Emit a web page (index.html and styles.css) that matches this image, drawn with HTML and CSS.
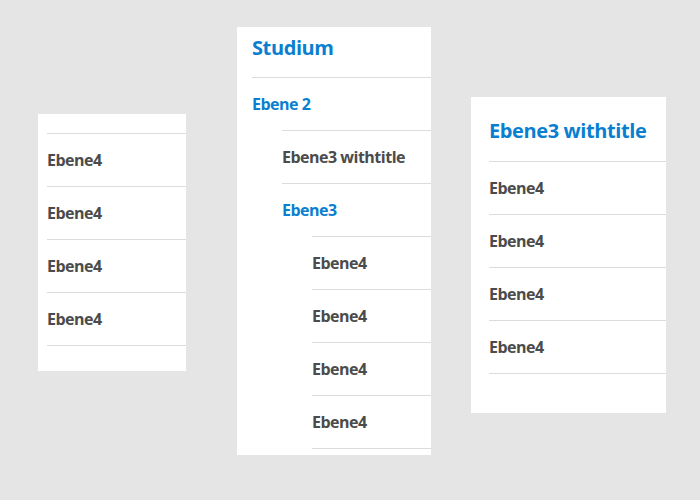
FILE: index.html
```html
<!DOCTYPE html>
<html lang="de">
<head>
<meta charset="utf-8">
<title>Navigation</title>
<link rel="stylesheet" href="styles.css">
</head>
<body>
<div class="stage">
  <nav class="card card-a">
    <ul class="list">
      <li class="item"><a class="link">Ebene4</a></li>
      <li class="item"><a class="link">Ebene4</a></li>
      <li class="item"><a class="link">Ebene4</a></li>
      <li class="item"><a class="link">Ebene4</a></li>
    </ul>
  </nav>

  <nav class="card card-b">
    <div class="title title-b">Studium</div>
    <ul class="list">
      <li class="item"><a class="link active">Ebene 2</a></li>
      <li class="item indent1"><a class="link">Ebene3 withtitle</a></li>
      <li class="item indent1"><a class="link active">Ebene3</a></li>
      <li class="item indent2"><a class="link">Ebene4</a></li>
      <li class="item indent2"><a class="link">Ebene4</a></li>
      <li class="item indent2"><a class="link">Ebene4</a></li>
      <li class="item indent2"><a class="link">Ebene4</a></li>
    </ul>
  </nav>

  <nav class="card card-c">
    <div class="title title-c">Ebene3 withtitle</div>
    <ul class="list">
      <li class="item"><a class="link">Ebene4</a></li>
      <li class="item"><a class="link">Ebene4</a></li>
      <li class="item"><a class="link">Ebene4</a></li>
      <li class="item"><a class="link">Ebene4</a></li>
    </ul>
  </nav>
</div>
</body>
</html>
```
FILE: styles.css
```css
html, body {
  margin: 0;
  padding: 0;
}
body {
  background: #e5e5e5;
  font-family: "Open Sans", "Liberation Sans", sans-serif;
  width: 700px;
  height: 500px;
  overflow: hidden;
}
.stage {
  display: flex;
  align-items: flex-start;
  padding-left: 38px;
}
.card {
  background: #fff;
}
.card-a {
  width: 148px;
  margin-top: 114px;
  padding: 19px 0 25px 9px;
  box-sizing: border-box;
}
.card-b {
  width: 194px;
  margin-top: 27px;
  margin-left: 51px;
  padding: 0 0 6px 15px;
  box-sizing: border-box;
}
.card-c {
  width: 195px;
  margin-top: 97px;
  margin-left: 40px;
  padding: 0 0 39px 18px;
  box-sizing: border-box;
}
.list {
  list-style: none;
  margin: 0;
  padding: 0;
}
.item {
  border-top: 1px solid #dcdcdc;
  height: 52px;
  display: flex;
  align-items: center;
}
.item:last-child {
  border-bottom: 1px solid #dcdcdc;
}
.indent1 { margin-left: 30px; }
.indent2 { margin-left: 60px; }
.link {
  font-size: 16px;
  font-weight: 700;
  color: #4b4b4b;
  letter-spacing: -0.5px;
  line-height: 20px;
  margin-top: 0;
}
.link.active {
  color: #0a7fd0;
}
.title {
  color: #0a7fd0;
  font-weight: 700;
  letter-spacing: -0.4px;
}
.title-b {
  font-size: 20px;
  height: 50px;
  line-height: 42px;
}
.title-c {
  font-size: 20px;
  height: 64px;
  line-height: 68px;
}
```
